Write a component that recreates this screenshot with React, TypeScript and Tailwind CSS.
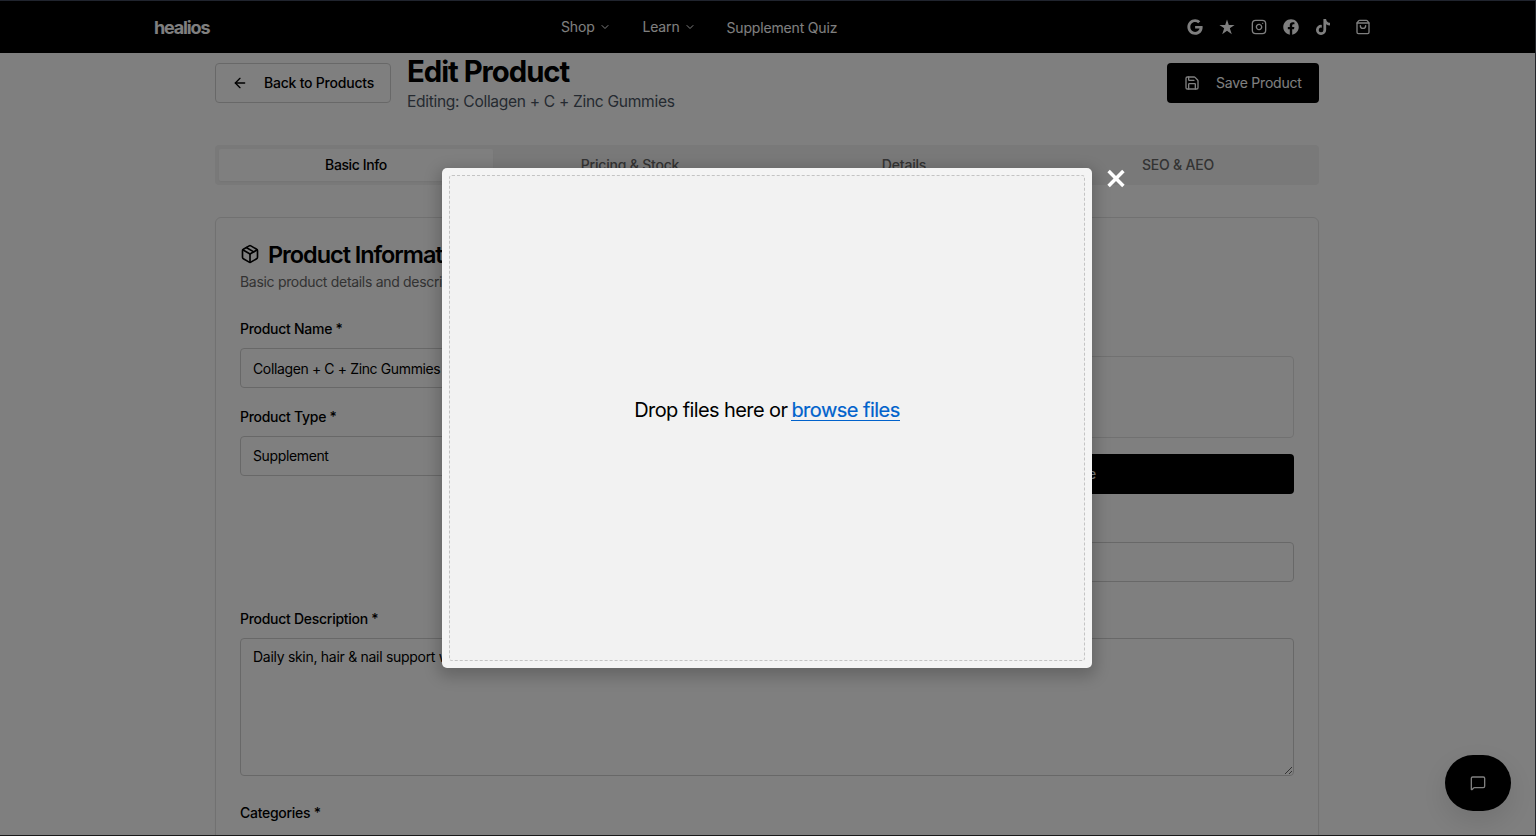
import React from "react";
import { ArrowLeft, ChevronDown, Image as ImageIcon, Instagram, MessageSquare, Package, Save, ShoppingBag } from "lucide-react";
import { FaFacebook, FaGoogle, FaTiktok } from "react-icons/fa";

const tabs = ["Basic Info", "Pricing & Stock", "Details", "SEO & AEO"];

function Header() {
  return (
    <header className="flex h-[53px] items-center bg-black pl-[154px] pr-[165px] pt-px text-white">
      <div className="w-[407px] pt-px text-[18px] font-bold leading-none tracking-[-1.15px]">healios</div>
      <nav className="flex items-center text-[14px] leading-5 tracking-[-0.17px] text-white">
        <span className="flex w-[81.5px] items-center gap-1">
          Shop <ChevronDown className="size-3" strokeWidth={2} />
        </span>
        <span className="flex w-[84px] items-center gap-1">
          Learn <ChevronDown className="size-3" strokeWidth={2} />
        </span>
        <span className="pt-0.5">Supplement Quiz</span>
      </nav>
      <div className="ml-auto flex items-center gap-4">
        <FaGoogle className="size-4" />
        <svg viewBox="0 0 16 16" className="size-4 fill-current">
          <path d="M8 .4 9.8 5.9h5.8l-4.8 3.3 2 6L8 11.7l-4.8 3.5 2-6L.4 5.9h5.8z" />
        </svg>
        <Instagram className="size-4" />
        <FaFacebook className="size-4" />
        <FaTiktok className="size-4" />
        <ShoppingBag className="ml-2 size-4" />
      </div>
    </header>
  );
}

function Label({ children }: { children: React.ReactNode }) {
  return <div className="text-[14px] font-medium leading-[14px] tracking-[-0.28px]">{children}</div>;
}

function Field({ value, className = "" }: { value: string; className?: string }) {
  return (
    <div
      className={`flex h-10 items-center whitespace-nowrap rounded-[4px] border border-[#d1d1d1] px-3 text-[14px] tracking-[-0.37px] ${className}`}
    >
      {value}
    </div>
  );
}

function UploadDialog() {
  return (
    <div className="absolute left-[442px] top-[168px] flex h-[500px] w-[650px] rounded-[5px] bg-[#f4f4f4] p-[7px] shadow-[0_5px_15px_4px_rgba(0,0,0,0.2)]">
      <div className="flex flex-1 items-center justify-center rounded-[3px] border border-dashed border-[#c4c4c4] bg-[#f2f2f2] pb-[17px] text-[20px] leading-7 tracking-[-0.6px] text-black">
        <span className="whitespace-nowrap">
          Drop files here or{" "}
          <span className="-ml-px inline-block h-6 border-b border-[#0062cc] leading-[26px] tracking-[-0.52px] text-[#0062cc] [-webkit-text-stroke:0.2px_#0062cc]">
            browse files
          </span>
        </span>
      </div>
      <svg viewBox="0 0 20 20" className="absolute left-[664px] top-px size-5 stroke-white">
        <path d="M2.6 2.1l14.8 14.8M17.4 2.1 2.6 16.9" strokeWidth="3.5" strokeLinecap="butt" />
      </svg>
    </div>
  );
}

export default function App() {
  return (
    <div className="relative h-[836px] w-[1536px] overflow-hidden bg-white font-['Inter','Liberation_Sans',sans-serif] text-black">
      <Header />
      <main className="ml-[215px] w-[1104px]">
        <div className="flex h-[92px] items-start pt-[10px]">
          <div className="flex h-10 w-[176px] items-center whitespace-nowrap rounded-[4px] border border-[#d1d1d1] pl-4 text-[14px] font-medium tracking-[-0.22px]">
            <ArrowLeft className="mr-4 size-4" />
            <span className="pb-0.5">Back to Products</span>
          </div>
          <div className="-mt-[9px] ml-4 whitespace-nowrap">
            <h1 className="text-[29.3px] font-bold leading-9 tracking-[-1.04px]">Edit Product</h1>
            <p className="text-[15.6px] leading-6 tracking-[-0.32px] text-[#4b5563]">Editing: Collagen + C + Zinc Gummies</p>
          </div>
          <div className="ml-auto flex h-10 w-[152px] items-center whitespace-nowrap rounded-[4px] bg-black pl-[17px] text-[14px] tracking-[-0.2px] text-white">
            <Save className="mr-4 size-4" />
            <span className="pb-0.5">Save Product</span>
          </div>
        </div>
        <div className="grid h-10 grid-cols-4 rounded-[4px] bg-[#f3f3f3] p-1 text-[14px]">
          {tabs.map((tab, i) => (
            <div
              key={tab}
              className={
                i === 0
                  ? "flex items-center justify-center rounded-[2px] bg-white pb-0.5 font-medium tracking-[-0.38px] shadow-xs"
                  : "flex items-center justify-center pb-0.5 font-medium tracking-[-0.2px] text-[#666666]"
              }
            >
              {tab}
            </div>
          ))}
        </div>
        <section className="mt-8 h-[700px] rounded-[6px] border border-[#e2e2e2] p-6 shadow-xs">
          <div className="flex h-7 items-center gap-2">
            <Package className="-mt-1 size-5" />
            <h2 className="-mt-0.5 text-[23.5px] font-semibold leading-7 tracking-[-1.06px]">Product Information</h2>
          </div>
          <p className="mt-0.5 text-[14px] leading-5 tracking-[-0.31px] text-[#666666]">Basic product details and description</p>
          <div className="mt-[30px] grid h-[290px] grid-cols-2 gap-6">
            <div>
              <Label>Product Name *</Label>
              <div className="mt-3">
                <Field value="Collagen + C + Zinc Gummies" />
              </div>
              <div className="mt-[22px]">
                <Label>Product Type *</Label>
              </div>
              <div className="mt-3">
                <Field value="Supplement" className="pb-0.5" />
              </div>
            </div>
            <div className="pt-[34px]">
              <div className="h-[82px] rounded-[4px] border border-[#e2e2e2]" />
              <div className="mt-4 flex h-10 items-center justify-center rounded-[4px] bg-black pb-0.5 pr-0.5 text-[14px] tracking-[-0.25px] text-white">
                <ImageIcon className="mr-4 size-4" />
                Upload Image
              </div>
              <div className="mt-12 h-10 rounded-[4px] border border-[#d1d1d1]" />
            </div>
          </div>
          <Label>Product Description *</Label>
          <textarea
            readOnly
            value="Daily skin, hair & nail support with collagen, vitamin C and zinc"
            className="mt-3 block h-[138px] w-full resize-y rounded-[4px] border border-[#d1d1d1] bg-transparent px-3 py-2 text-[14px] leading-5 tracking-[-0.29px] outline-none"
          />
          <div className="mt-[30px]">
            <Label>Categories *</Label>
          </div>
        </section>
      </main>
      <div className="absolute left-[1445px] top-[755px] flex h-14 w-[66px] items-center justify-center rounded-[28px] bg-black text-white shadow-[0_10px_30px_rgba(0,0,0,0.12)]">
        <MessageSquare className="size-4" />
      </div>
      <div className="absolute inset-0 bg-black/50" />
      <div className="absolute inset-0 border-b border-r border-t border-b-[#1a1a1a] border-r-[#24262b] border-t-[#20242e]" />
      <UploadDialog />
    </div>
  );
}
